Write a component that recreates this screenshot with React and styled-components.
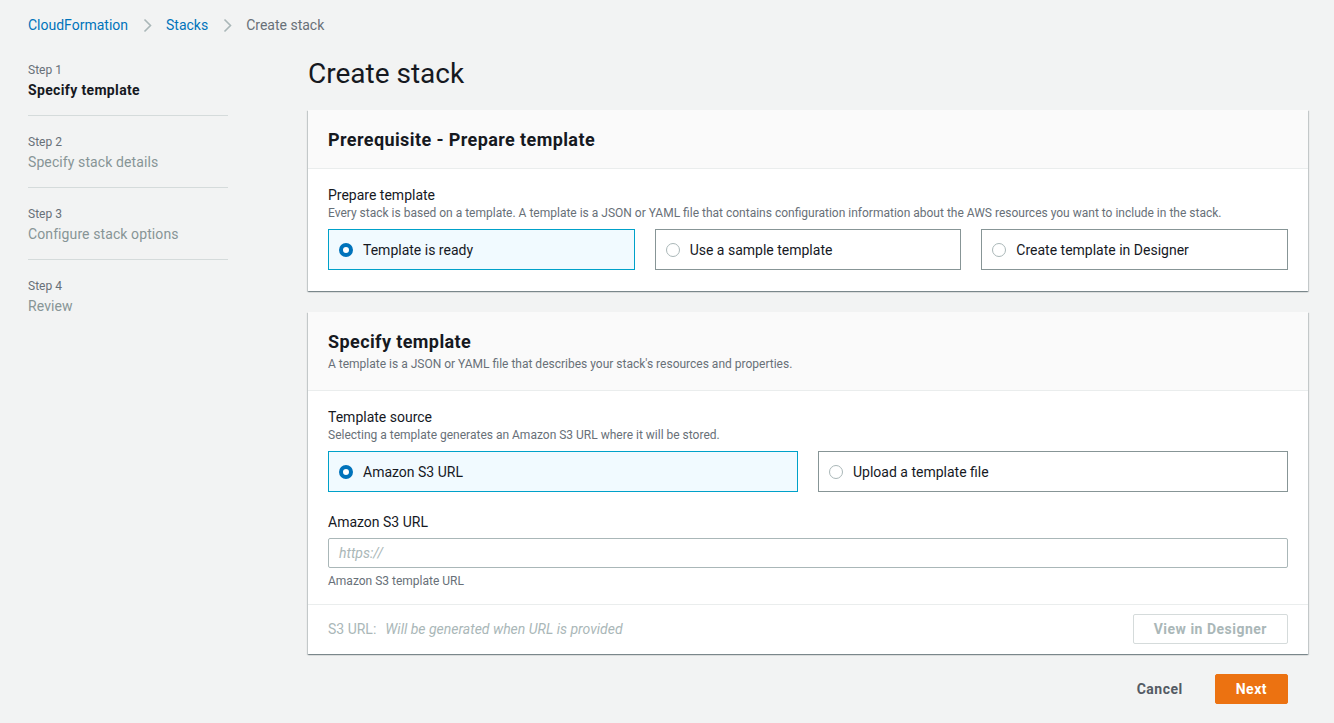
import React from "react";
import styled, { createGlobalStyle } from "styled-components";

const Global = createGlobalStyle`
  html, body { margin: 0; padding: 0; background: #f2f3f3; }
  body { font-family: Roboto, "Liberation Sans", Arial, sans-serif; color: #16191f; font-size: 14px; }
  * { box-sizing: border-box; }
`;

const Page = styled.div`
  min-height: 723px;
  background: #f2f3f3;
  padding: 15px 26px 20px 28px;
`;

const Breadcrumbs = styled.nav`
  display: flex;
  align-items: center;
  height: 20px;
  font-size: 14px;
  line-height: 20px;
`;

const Crumb = styled.span`
  color: ${(p) => (p.$current ? "#687078" : "#0073bb")};
`;

const Sep = styled.span`
  display: inline-flex;
  margin: 0 14px 0 15px;
  color: #aab7b8;
`;

const Layout = styled.div`
  display: grid;
  grid-template-columns: 200px 1fr;
  column-gap: 80px;
  margin-top: 9px;
`;

const Steps = styled.ol`
  list-style: none;
  margin: 0;
  padding: 0;
`;

const Step = styled.li`
  padding: 18px 0 15px;
  border-bottom: ${(p) => (p.$last ? "none" : "1px solid #d5dbdb")};
`;

const StepNum = styled.div`
  font-size: 12px;
  line-height: 16px;
  color: #687078;
`;

const StepName = styled.div`
  margin-top: 2px;
  font-size: 14px;
  line-height: 20px;
  font-weight: ${(p) => (p.$active ? 700 : 400)};
  letter-spacing: ${(p) => (p.$active ? "0.35px" : "0.1px")};
  color: ${(p) => (p.$active ? "#16191f" : "#879596")};
`;

const Main = styled.main`
  display: flex;
  flex-direction: column;
`;

const Title = styled.h1`
  margin: 12px 0 18px;
  font-size: 28px;
  line-height: 36px;
  font-weight: 400;
  color: #16191f;
`;

const Card = styled.section`
  background: #fff;
  box-shadow: 0 1px 1px 0 rgba(0, 28, 36, 0.3), 1px 1px 1px 0 rgba(0, 28, 36, 0.15),
    -1px 1px 1px 0 rgba(0, 28, 36, 0.15);
  margin-bottom: 21px;
`;

const CardHeader = styled.header`
  background: #fafafa;
  border-bottom: 1px solid #eaeded;
  padding: 19px 20px ${(p) => (p.$withDesc ? 18 : 17)}px;
`;

const CardTitle = styled.h2`
  margin: 0;
  font-size: 18px;
  line-height: 22px;
  font-weight: 700;
  letter-spacing: 0.4px;
`;

const CardDesc = styled.p`
  margin: 3px 0 0;
  font-size: 12px;
  line-height: 16px;
  color: #687078;
`;

const CardBody = styled.div`
  padding: 16px 20px ${(p) => p.$bottom || 21}px;
`;

const Field = styled.div`
  & + & { margin-top: 20px; }
`;

const Label = styled.div`
  font-size: 14px;
  line-height: 20px;
  color: #16191f;
`;

const Hint = styled.div`
  font-size: 12px;
  line-height: 16px;
  color: #687078;
  margin-top: ${(p) => p.$mt || 0}px;
`;

const Tiles = styled.div`
  display: grid;
  grid-template-columns: repeat(${(p) => p.$cols}, 1fr);
  gap: 20px;
  margin-top: 8px;
`;

const Tile = styled.label`
  display: flex;
  align-items: center;
  gap: 10px;
  height: 41px;
  padding: 0 10px;
  border: 1px solid ${(p) => (p.$selected ? "#00a1c9" : "#879596")};
  background: ${(p) => (p.$selected ? "#f1faff" : "#fff")};
  font-size: 14px;
  color: #16191f;
`;

const Radio = styled.span`
  width: 14px;
  height: 14px;
  border-radius: 50%;
  flex: none;
  background: #fff;
  border: ${(p) => (p.$checked ? "4px solid #0073bb" : "1px solid #aab7b8")};
`;

const Input = styled.div`
  margin-top: 6px;
  height: 30px;
  border: 1px solid #aab7b8;
  border-radius: 2px;
  padding: 0 10px;
  display: flex;
  align-items: center;
  font-size: 14px;
  font-style: italic;
  color: #aab7b8;
`;

const CardFooter = styled.footer`
  border-top: 1px solid #eaeded;
  padding: 9px 20px 10px;
  display: flex;
  align-items: center;
  justify-content: space-between;
`;

const Muted = styled.span`
  color: #aab7b8;
  font-size: 14px;
  font-style: ${(p) => (p.$italic ? "italic" : "normal")};
  margin-left: ${(p) => p.$ml || 0}px;
`;

const Button = styled.button`
  height: 30px;
  padding: 0 20px;
  border-radius: 2px;
  font-family: inherit;
  font-size: 14px;
  font-weight: 700;
  letter-spacing: 0.5px;
  cursor: pointer;
  ${(p) =>
    p.$variant === "primary"
      ? `background:#ec7211;border:1px solid #ec7211;color:#fff;`
      : p.$variant === "link"
      ? `background:transparent;border:1px solid transparent;color:#545b64;`
      : `background:#fff;border:1px solid #d5dbdb;color:#aab7b8;`}
`;

const Actions = styled.div`
  display: flex;
  justify-content: flex-end;
  gap: 11px;
  padding-right: 20px;
  margin-top: -1px;
`;

const Chevron = () => (
  <svg width="9" height="15" viewBox="0 0 9 15" fill="none">
    <path d="M1.5 1.5 L7.5 7.5 L1.5 13.5" stroke="currentColor" strokeWidth="1.6" />
  </svg>
);

const steps = [
  ["Step 1", "Specify template"],
  ["Step 2", "Specify stack details"],
  ["Step 3", "Configure stack options"],
  ["Step 4", "Review"],
];

export default function App() {
  return (
    <Page>
      <Global />
      <Breadcrumbs>
        <Crumb>CloudFormation</Crumb>
        <Sep><Chevron /></Sep>
        <Crumb>Stacks</Crumb>
        <Sep><Chevron /></Sep>
        <Crumb $current>Create stack</Crumb>
      </Breadcrumbs>
      <Layout>
        <Steps>
          {steps.map(([n, name], i) => (
            <Step key={n} $last={i === steps.length - 1}>
              <StepNum>{n}</StepNum>
              <StepName $active={i === 0}>{name}</StepName>
            </Step>
          ))}
        </Steps>
        <Main>
          <Title>Create stack</Title>
          <Card>
            <CardHeader>
              <CardTitle>Prerequisite - Prepare template</CardTitle>
            </CardHeader>
            <CardBody>
              <Label>Prepare template</Label>
              <Hint>
                Every stack is based on a template. A template is a JSON or YAML file that contains
                configuration information about the AWS resources you want to include in the stack.
              </Hint>
              <Tiles $cols={3}>
                <Tile $selected><Radio $checked />Template is ready</Tile>
                <Tile><Radio />Use a sample template</Tile>
                <Tile><Radio />Create template in Designer</Tile>
              </Tiles>
            </CardBody>
          </Card>
          <Card>
            <CardHeader $withDesc>
              <CardTitle>Specify template</CardTitle>
              <CardDesc>
                A template is a JSON or YAML file that describes your stack's resources and properties.
              </CardDesc>
            </CardHeader>
            <CardBody $bottom={15}>
              <Field>
                <Label>Template source</Label>
                <Hint>Selecting a template generates an Amazon S3 URL where it will be stored.</Hint>
                <Tiles $cols={2}>
                  <Tile $selected><Radio $checked />Amazon S3 URL</Tile>
                  <Tile><Radio />Upload a template file</Tile>
                </Tiles>
              </Field>
              <Field>
                <Label>Amazon S3 URL</Label>
                <Input>https://</Input>
                <Hint $mt={5}>Amazon S3 template URL</Hint>
              </Field>
            </CardBody>
            <CardFooter>
              <div>
                <Muted>S3 URL:</Muted>
                <Muted $italic $ml={9}>Will be generated when URL is provided</Muted>
              </div>
              <Button>View in Designer</Button>
            </CardFooter>
          </Card>
          <Actions>
            <Button $variant="link">Cancel</Button>
            <Button $variant="primary">Next</Button>
          </Actions>
        </Main>
      </Layout>
    </Page>
  );
}
